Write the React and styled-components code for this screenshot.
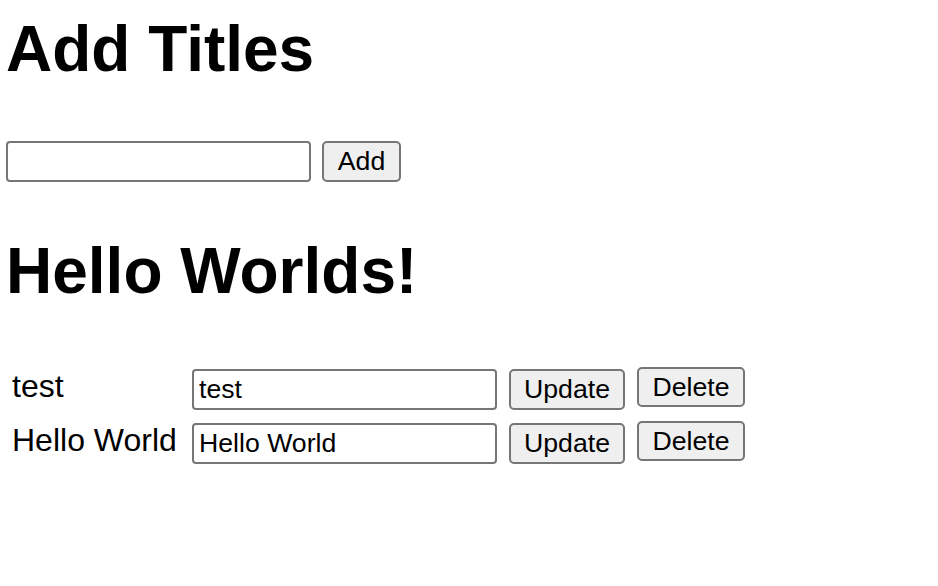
import React, { useState } from "react";
import styled, { createGlobalStyle } from "styled-components";

const Global = createGlobalStyle`
  html, body { margin: 0; padding: 0; background: #ffffff; }
  body { font-family: "Liberation Sans", Arial, Helvetica, sans-serif; color: #000; }
`;

const Page = styled.div`
  padding: 0 0 0 6px;
`;

const Heading = styled.h1`
  margin: ${(p) => p.$top}px 0 0 0;
  font-size: 64px;
  line-height: 74px;
  font-weight: 700;
  letter-spacing: 0;
`;

const FormRow = styled.div`
  margin-top: 55px;
  display: flex;
  align-items: center;
  gap: 11px;
`;

const TextInput = styled.input`
  box-sizing: border-box;
  width: 305px;
  height: 41px;
  margin: 0;
  padding: 2px 5px;
  border: 2px solid #767676;
  border-radius: 4px;
  font-family: "Liberation Sans", Arial, sans-serif;
  font-size: 26.67px;
  color: #000;
  background: #fff;
  outline: none;
`;

const Button = styled.button`
  box-sizing: border-box;
  width: ${(p) => p.$w}px;
  height: ${(p) => p.$h || 41}px;
  margin: ${(p) => (p.$lift ? `-${p.$lift}px 0 0 0` : 0)};
  padding: 0;
  border: 2px solid #767676;
  border-radius: 5px;
  background: #efefef;
  font-family: "Liberation Sans", Arial, sans-serif;
  font-size: 26.67px;
  color: #000;
  align-self: start;
  cursor: pointer;
`;

const List = styled.div`
  margin-top: 61px;
  padding-left: 6px;
  display: grid;
  grid-template-columns: 168px 305px 116px 108px;
  column-gap: 12px;
  row-gap: 13px;
  align-items: start;
`;

const Label = styled.div`
  font-size: 32px;
  line-height: 41px;
  margin-top: -3px;
  white-space: nowrap;
`;

const items = ["test", "Hello World"];

export default function App() {
  const [values, setValues] = useState(items);
  return (
    <Page>
      <Global />
      <Heading $top={12}>Add Titles</Heading>
      <FormRow>
        <TextInput defaultValue="" />
        <Button $w={79}>Add</Button>
      </FormRow>
      <Heading $top={52}>Hello Worlds!</Heading>
      <List>
        {items.map((t, i) => (
          <React.Fragment key={t}>
            <Label>{t}</Label>
            <TextInput
              value={values[i]}
              onChange={(e) => {
                const n = [...values];
                n[i] = e.target.value;
                setValues(n);
              }}
            />
            <Button $w={116}>Update</Button>
            <Button $w={108} $h={40} $lift={2}>Delete</Button>
          </React.Fragment>
        ))}
      </List>
    </Page>
  );
}
